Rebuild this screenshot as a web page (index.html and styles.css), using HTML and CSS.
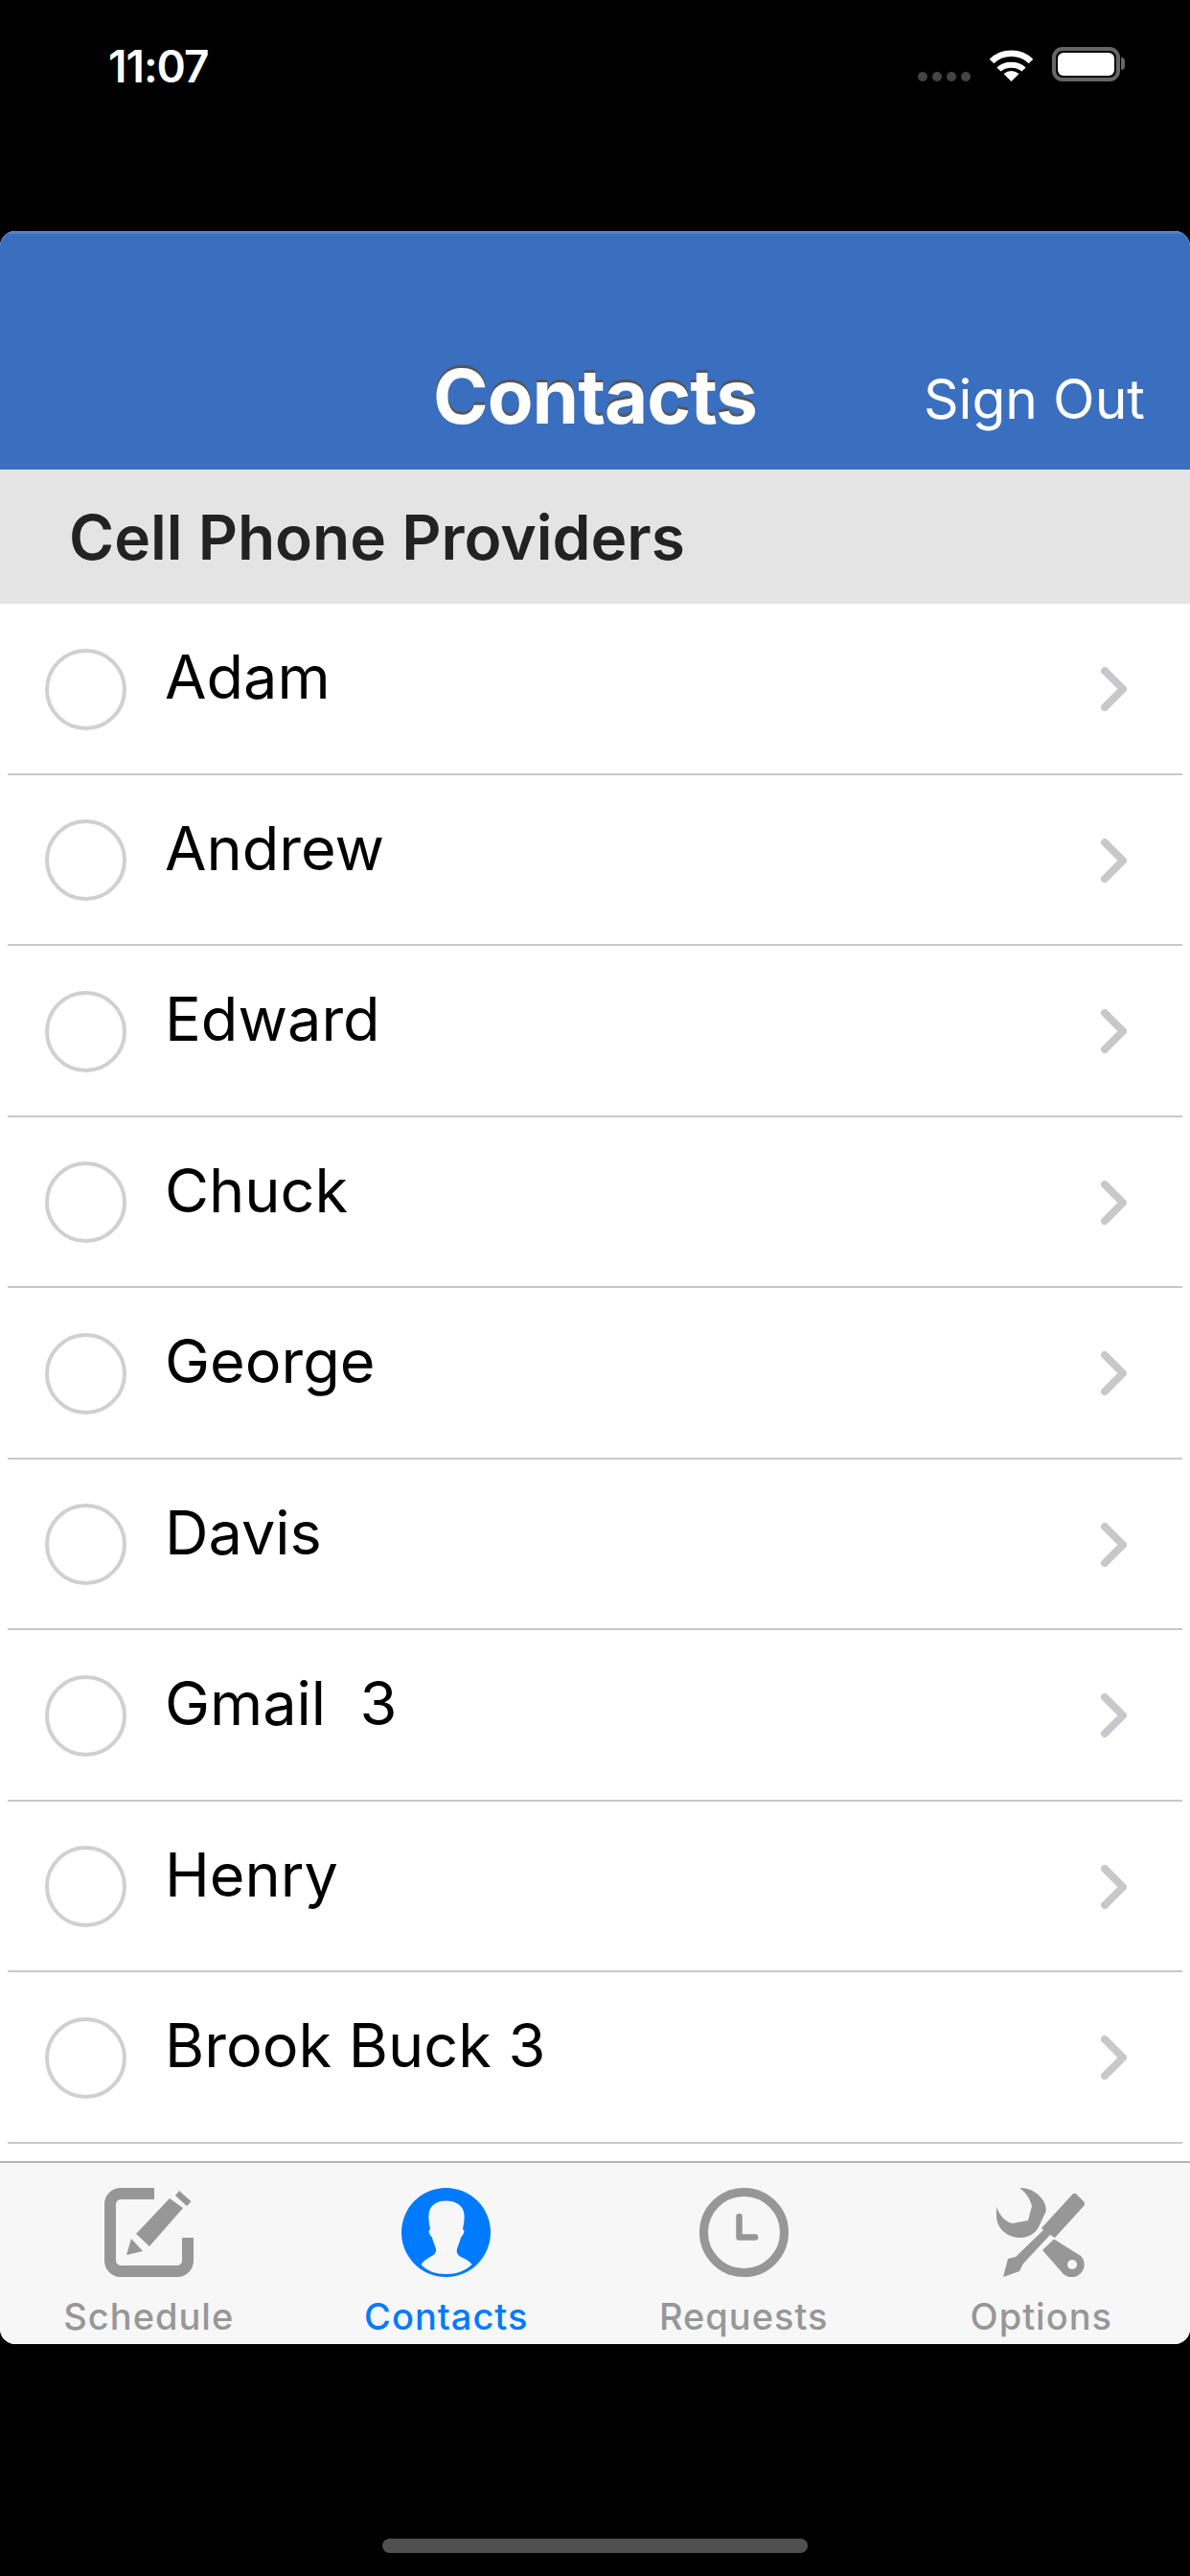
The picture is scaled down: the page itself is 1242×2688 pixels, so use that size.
FILE: index.html
```html
<!DOCTYPE html>
<html lang="en">
<head>
  <meta charset="UTF-8">
  <title>Contacts</title>
  <meta name="viewport" content="width=device-width, initial-scale=1">
  <link rel="stylesheet" href="styles.css">
</head>
<body>
  <div class="status-bar">
    <span class="time">11:07</span>
    <div class="status-icons">
      <div class="signal"><span></span><span></span><span></span><span></span></div>
      <svg class="wifi" width="47" height="36" viewBox="0 0 47 36">
        <path d="M3 15 C14 4 33 4 44 15" fill="none" stroke="#fff" stroke-width="6.5"/>
        <path d="M10.5 23.5 C17 17 30 17 36.5 23.5" fill="none" stroke="#fff" stroke-width="6"/>
        <path d="M15.5 28 Q23.5 22 31.5 28 L23.5 36 Z" fill="#fff"/>
      </svg>
      <div class="battery"><div class="battery-fill"></div></div>
    </div>
  </div>

  <div class="app">
    <header class="nav-bar">
      <span></span>
      <h1>Contacts</h1>
      <a class="sign-out">Sign Out</a>
    </header>
    <div class="section-title">Cell Phone Providers</div>

    <div class="list">
      <div class="row"><span class="radio"></span><span class="name">Adam</span><svg class="chevron" viewBox="0 0 27 46"><path d="M4 4 L23 23 L4 42"/></svg></div>
      <div class="row"><span class="radio"></span><span class="name">Andrew</span><svg class="chevron" viewBox="0 0 27 46"><path d="M4 4 L23 23 L4 42"/></svg></div>
      <div class="row"><span class="radio"></span><span class="name">Edward</span><svg class="chevron" viewBox="0 0 27 46"><path d="M4 4 L23 23 L4 42"/></svg></div>
      <div class="row"><span class="radio"></span><span class="name">Chuck</span><svg class="chevron" viewBox="0 0 27 46"><path d="M4 4 L23 23 L4 42"/></svg></div>
      <div class="row"><span class="radio"></span><span class="name">George</span><svg class="chevron" viewBox="0 0 27 46"><path d="M4 4 L23 23 L4 42"/></svg></div>
      <div class="row"><span class="radio"></span><span class="name">Davis</span><svg class="chevron" viewBox="0 0 27 46"><path d="M4 4 L23 23 L4 42"/></svg></div>
      <div class="row"><span class="radio"></span><span class="name">Gmail&nbsp; 3</span><svg class="chevron" viewBox="0 0 27 46"><path d="M4 4 L23 23 L4 42"/></svg></div>
      <div class="row"><span class="radio"></span><span class="name">Henry</span><svg class="chevron" viewBox="0 0 27 46"><path d="M4 4 L23 23 L4 42"/></svg></div>
      <div class="row"><span class="radio"></span><span class="name">Brook Buck 3</span><svg class="chevron" viewBox="0 0 27 46"><path d="M4 4 L23 23 L4 42"/></svg></div>
    </div>

    <nav class="tab-bar">
      <div class="tab">
        <svg class="tab-icon" viewBox="0 0 93 93">
          <path d="M52 6 H17 a11 11 0 0 0 -11 11 V76 a11 11 0 0 0 11 11 H76 a11 11 0 0 0 11 -11 V52" fill="none" stroke="#979797" stroke-width="12"/>
          <path fill="#979797" d="M33 48 L68 11 L82 21 L47 61 Z M28 53 L40 66 L23 70 Z M78 3 L90.5 14 L86 19 L74 8 Z"/>
        </svg>
        <span>Schedule</span>
      </div>
      <div class="tab active">
        <svg class="tab-icon" viewBox="0 0 93 93">
          <circle cx="46.5" cy="46.5" r="46.5" fill="#007aff"/>
          <path fill="#f7f7f7" d="M46.5 13.5 C37 13.5 29 18 28.5 28 C28 34 29.5 40 30 43 L28.5 45 C29 49 31 50 32 52 C33 56 35 60 36 64 C36.5 68 34 70 30 72 C27 74 23 76 20.5 80 C27 87 36 90 46.5 90 C57 90 66 87 73.5 80 C71 76 66 74 62 72 C59 70 57 68 58 64 C59 60 61 56 62 52 C63 50 65 49 65.5 45 L64 43 C64.5 40 66 34 65.5 28 C65 18 56 13.5 46.5 13.5 Z"/>
        </svg>
        <span>Contacts</span>
      </div>
      <div class="tab">
        <svg class="tab-icon" viewBox="0 0 93 93">
          <circle cx="46.5" cy="46.5" r="42" fill="none" stroke="#979797" stroke-width="9"/>
          <path d="M41.5 30 V51.5 H58" fill="none" stroke="#979797" stroke-width="6.5" stroke-linecap="round" stroke-linejoin="round"/>
        </svg>
        <span>Requests</span>
      </div>
      <div class="tab">
        <svg class="tab-icon" viewBox="0 0 93 93">
          <path fill="#979797" d="M24 0 C34 0 42 4 48 12 C52 18 53 24 50 28 L44 41 C40 48 33 52 25 52 C11 52 0 42 0 29 L0 20 C4 30 10 36 17 37 L33 34 L37 19 C35 11 31 5 24 0 Z"/>
          <path fill="#979797" d="M48 65 L60 53.5 L88 71 A13.1 13.1 0 0 1 70 90 Z"/>
          <circle cx="79" cy="80" r="5" fill="#f7f7f7"/>
          <path d="M54 46 L24 76" fill="none" stroke="#f7f7f7" stroke-width="12"/>
          <path fill="#979797" d="M80 6 Q82 5 84 7 L91 14 Q93 17 91 19 L61 52 L56 49 L28 79 L24 87 L7 93 L12 74 L20 72 L49 44 L47 42 Z"/>
        </svg>
        <span>Options</span>
      </div>
    </nav>
  </div>

  <div class="home-area"><div class="home-bar"></div></div>
</body>
</html>
```

FILE: styles.css
```css
body {
  margin: 0;
  height: 2688px;
  background: #000;
  font-family: Inter, 'Noto Sans', sans-serif;
  overflow: hidden;
}
.status-bar {
  height: 241px;
  box-sizing: border-box;
  padding: 41px 73px 0 113px;
  display: flex;
  justify-content: space-between;
  align-items: flex-start;
  color: #fff;
}
.time {
  font-size: 46px;
  font-weight: 600;
  line-height: 56px;
  letter-spacing: -1px;
}
.status-icons {
  display: flex;
  align-items: flex-start;
  margin-top: 8px;
}
.signal {
  display: flex;
  gap: 5px;
  margin: 26px 19px 0 0;
}
.signal span {
  width: 10px;
  height: 10px;
  border-radius: 50%;
  background: #444;
}
.wifi {
  margin-right: 19px;
}
.battery {
  position: relative;
  width: 71px;
  height: 36px;
  box-sizing: border-box;
  border: 4px solid #666;
  border-radius: 11px;
  padding: 2px;
}
.battery::after {
  content: '';
  position: absolute;
  right: -9px;
  top: 7px;
  width: 4px;
  height: 13px;
  background: #666;
  border-radius: 0 6px 6px 0;
}
.battery-fill {
  height: 100%;
  background: #fff;
  border-radius: 6px;
}
.app {
  height: 2205px;
  display: flex;
  flex-direction: column;
  border-radius: 16px;
  overflow: hidden;
  background: #fff;
}
.nav-bar {
  height: 249px;
  box-sizing: border-box;
  padding: 0 47px 32px;
  display: grid;
  grid-template-columns: 1fr auto 1fr;
  align-items: end;
  background: #3a6fc0;
  border-top: 3px solid #5083cc;
}
.nav-bar h1 {
  margin: 0;
  color: #fff;
  font-size: 78px;
  font-weight: 700;
  line-height: 88px;
  letter-spacing: -1px;
  text-shadow: 0 -3px 0 #555;
}
.sign-out {
  justify-self: end;
  color: #fff;
  font-size: 57px;
  line-height: 68px;
  margin-bottom: 7px;
}
.section-title {
  height: 140px;
  box-sizing: border-box;
  padding: 35px 0 0 72px;
  background: #e4e4e4;
  color: #222;
  font-size: 64px;
  font-weight: 600;
  line-height: 72px;
}
.list {
  flex: 1;
  overflow: hidden;
}
.row {
  height: 178.5px;
  box-sizing: border-box;
  margin: 0 8px;
  padding: 2px 0 0 39px;
  display: flex;
  align-items: center;
  border-bottom: 2px solid #c8c8c8;
}
.radio {
  width: 85px;
  height: 85px;
  box-sizing: border-box;
  border: 4px solid #d0d0d4;
  border-radius: 50%;
  flex: none;
}
.name {
  flex: 1;
  margin: 0 0 26px 40px;
  color: #000;
  font-size: 63px;
  line-height: 72px;
}
.chevron {
  width: 27px;
  height: 46px;
  margin-right: 58px;
  flex: none;
}
.chevron path {
  fill: none;
  stroke: #c8c8cc;
  stroke-width: 8;
  stroke-linecap: round;
  stroke-linejoin: round;
}
.tab-bar {
  height: 191px;
  box-sizing: border-box;
  display: grid;
  grid-template-columns: repeat(4, 1fr);
  background: #f7f7f7;
  border-top: 2px solid #b4b4b4;
  padding-top: 26px;
}
.tab {
  display: flex;
  flex-direction: column;
  align-items: center;
  color: #979797;
  font-size: 38px;
  font-weight: 500;
  line-height: 44px;
  letter-spacing: 1px;
}
.tab.active {
  color: #007aff;
}
.tab-icon {
  width: 93px;
  height: 93px;
  margin-bottom: 19px;
}
.home-area {
  padding-top: 203px;
  display: flex;
  justify-content: center;
}
.home-bar {
  width: 444px;
  height: 15px;
  border-radius: 8px;
  background: #505050;
}
```
